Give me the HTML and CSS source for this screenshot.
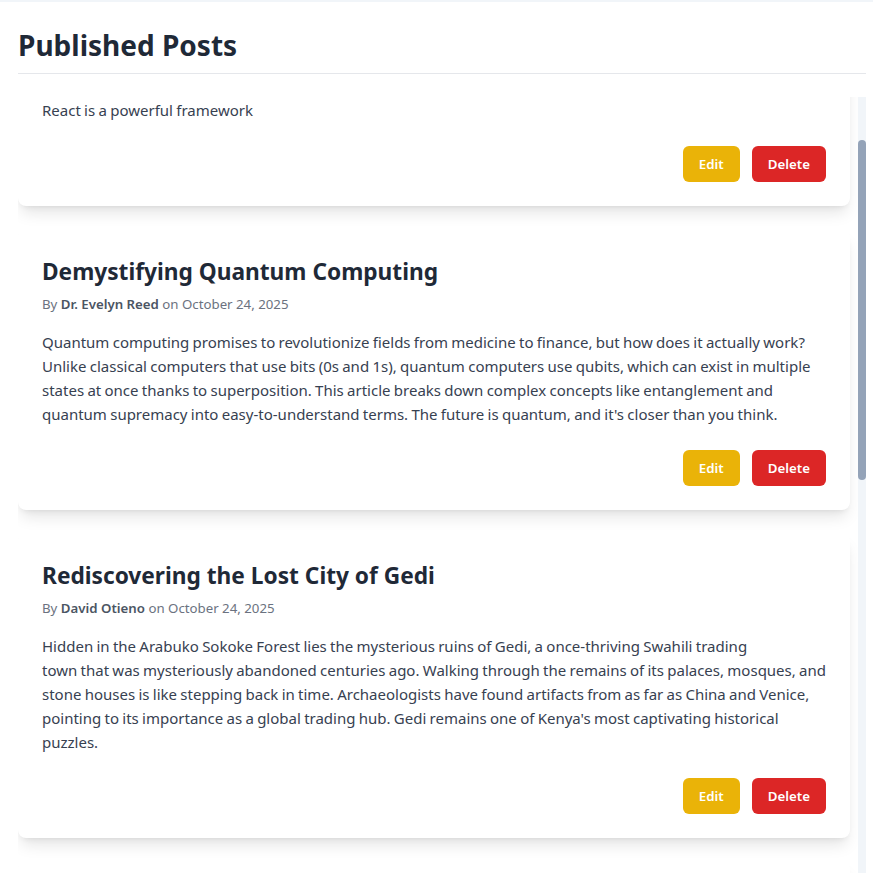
FILE: index.html
```html
<!DOCTYPE html>
<html lang="en">
<head>
<meta charset="utf-8">
<title>Published Posts</title>
<link rel="stylesheet" href="styles.css">
</head>
<body>
<div class="topbar"></div>
<main class="page">
  <h2 class="page-title">Published Posts</h2>
  <div class="posts-frame">
    <div class="posts" id="posts">
      <article class="card">
        <h3 class="card-title">Getting Started with React</h3>
        <p class="meta">By <strong>Jane Mwangi</strong> on October 24, 2025</p>
        <p class="body">React is a powerful framework</p>
        <div class="actions"><button class="btn btn-edit">Edit</button><button class="btn btn-delete">Delete</button></div>
      </article>
      <article class="card">
        <h3 class="card-title">Demystifying Quantum Computing</h3>
        <p class="meta">By <strong>Dr. Evelyn Reed</strong> on October 24, 2025</p>
        <p class="body">Quantum computing promises to revolutionize fields from medicine to finance, but how does it actually work?<br>Unlike classical computers that use bits (0s and 1s), quantum computers use qubits, which can exist in multiple<br>states at once thanks to superposition. This article breaks down complex concepts like entanglement and<br>quantum supremacy into easy-to-understand terms. The future is quantum, and it's closer than you think.</p>
        <div class="actions"><button class="btn btn-edit">Edit</button><button class="btn btn-delete">Delete</button></div>
      </article>
      <article class="card">
        <h3 class="card-title">Rediscovering the Lost City of Gedi</h3>
        <p class="meta">By <strong>David Otieno</strong> on October 24, 2025</p>
        <p class="body">Hidden in the Arabuko Sokoke Forest lies the mysterious ruins of Gedi, a once-thriving Swahili trading<br>town that was mysteriously abandoned centuries ago. Walking through the remains of its palaces, mosques, and<br>stone houses is like stepping back in time. Archaeologists have found artifacts from as far as China and Venice,<br>pointing to its importance as a global trading hub. Gedi remains one of Kenya's most captivating historical<br>puzzles.</p>
        <div class="actions"><button class="btn btn-edit">Edit</button><button class="btn btn-delete">Delete</button></div>
      </article>
      <article class="card">
        <h3 class="card-title">The Art of Slow Travel</h3>
        <p class="meta">By <strong>Amina Hassan</strong> on October 24, 2025</p>
        <p class="body">Slow travel is about connection rather than collection. Instead of racing between landmarks, travellers linger in one place, learn a few words of the local language, and let the rhythm of daily life set the pace. The reward is a deeper understanding of the places we visit.</p>
        <div class="actions"><button class="btn btn-edit">Edit</button><button class="btn btn-delete">Delete</button></div>
      </article>
      <article class="card">
        <h3 class="card-title">Why Sleep Is Your Superpower</h3>
        <p class="meta">By <strong>Dr. Samuel Kiptoo</strong> on October 24, 2025</p>
        <p class="body">Sleep is not a luxury; it is a biological necessity. During deep sleep the brain consolidates memories, clears out waste and restores energy. Learn simple habits that can help you get better rest every night.</p>
        <div class="actions"><button class="btn btn-edit">Edit</button><button class="btn btn-delete">Delete</button></div>
      </article>
      <article class="card">
        <h3 class="card-title">Building a Home Garden</h3>
        <p class="meta">By <strong>Grace Wanjiru</strong> on October 24, 2025</p>
        <p class="body">Growing your own vegetables is easier than you think. With a few containers, good soil and some patience, even a small balcony can produce fresh herbs and greens all year round.</p>
        <div class="actions"><button class="btn btn-edit">Edit</button><button class="btn btn-delete">Delete</button></div>
      </article>
    </div>
    <div class="scrollbar"><div class="thumb"></div></div>
  </div>
</main>
<script src="script.js"></script>
</body>
</html>
```
FILE: styles.css
```css
* { box-sizing: border-box; }
html, body { margin: 0; padding: 0; }
body {
  background: #ffffff;
  font-family: "Noto Sans", "Open Sans", Arial, sans-serif;
  color: #374151;
}
.topbar { height: 2px; background: #f1f5f9; }
.page { padding: 25px 7px 20px 18px; }
.page-title {
  margin: 0;
  font-size: 28px;
  line-height: 36px;
  font-weight: 700;
  color: #1f2937;
  padding-bottom: 10px;
  border-bottom: 1px solid #e5e7eb;
}
.posts-frame {
  margin-top: 23px;
  height: 776px;
  display: flex;
}
.posts {
  flex: 1;
  min-width: 0;
  overflow: hidden;
  padding-right: 8px;
  display: flex;
  flex-direction: column;
  gap: 24px;
  padding-bottom: 24px;
}
.scrollbar {
  flex: none;
  width: 8px;
  background: #f1f5f9;
}
.thumb {
  margin-top: 43px;
  height: 340px;
  background: #94a3b8;
  border-radius: 4px;
}
.card {
  flex: none;
  background: #ffffff;
  border-radius: 8px;
  padding: 24px;
  box-shadow: 0 10px 15px -3px rgba(0,0,0,0.1), 0 4px 6px -4px rgba(0,0,0,0.1);
}
.card-title {
  margin: 0;
  font-size: 22.7px;
  line-height: 36px;
  font-weight: 700;
  color: #1f2937;
}
.meta {
  margin: 4px 0 0;
  font-size: 13.25px;
  line-height: 20px;
  color: #6b7280;
}
.meta strong { color: #4b5563; font-weight: 600; }
.body {
  margin: 16px 0 0;
  font-size: 15px;
  line-height: 24px;
  word-spacing: -0.6px;
  color: #374151;
}
.actions {
  margin-top: 24px;
  display: flex;
  justify-content: flex-end;
  gap: 12px;
}
.btn {
  border: none;
  border-radius: 6px;
  height: 36px;
  padding: 0 16px;
  font-family: inherit;
  font-size: 13.3px;
  font-weight: 600;
  color: #ffffff;
  cursor: pointer;
}
.btn-edit { background: #eab308; }
.btn-delete { background: #dc2626; }
```
FILE: script.js
```js
document.getElementById('posts').scrollTop = 99;
```
